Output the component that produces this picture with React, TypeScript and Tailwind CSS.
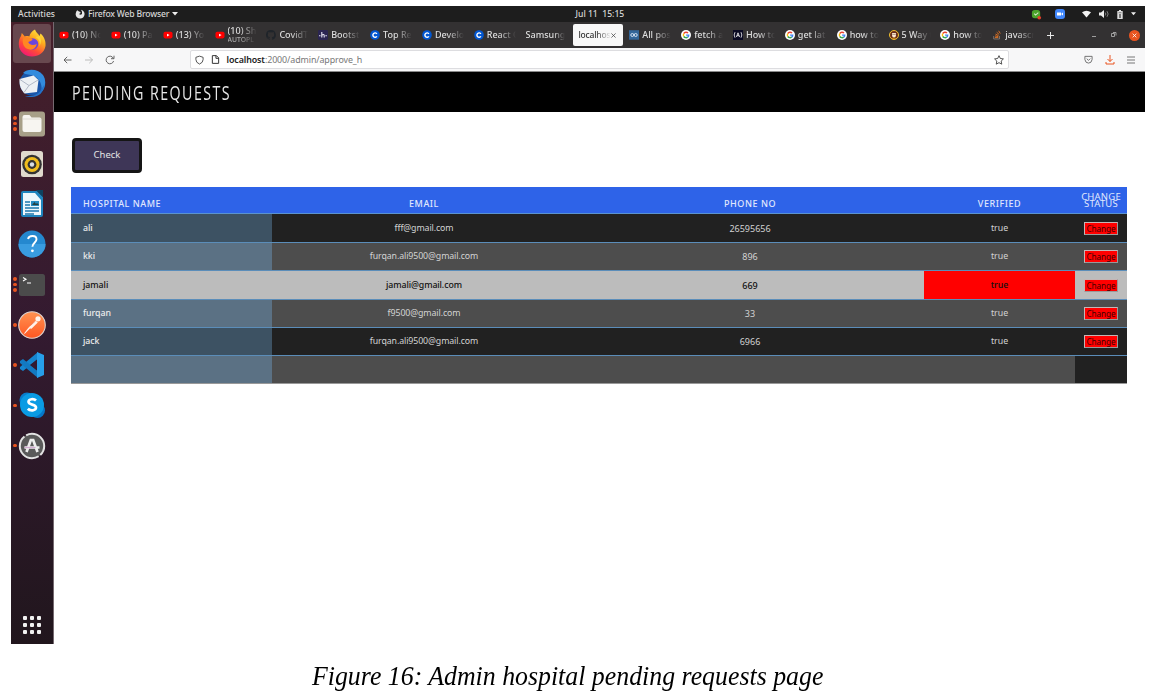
import React from "react";

type TabData = { icon?: string; text: string; sub?: string; active?: boolean };

const tabs: TabData[] = [
  { icon: "yt", text: "(10) No" },
  { icon: "yt", text: "(10) Pa" },
  { icon: "yt", text: "(13) Yo" },
  { icon: "yt", text: "(10) Sh", sub: "AUTOPL" },
  { icon: "gh", text: "CovidT" },
  { icon: "hn", text: "Bootst" },
  { icon: "c", text: "Top Re" },
  { icon: "c", text: "Develo" },
  { icon: "c", text: "React C" },
  { text: "Samsung E" },
  { text: "localhos", active: true },
  { icon: "oo", text: "All pos" },
  { icon: "g", text: "fetch a" },
  { icon: "a", text: "How to" },
  { icon: "g", text: "get lat" },
  { icon: "g", text: "how to" },
  { icon: "face", text: "5 Way t" },
  { icon: "g", text: "how to" },
  { icon: "so", text: "javascr" },
];

function Favicon({ kind }: { kind: string }) {
  const cls = "h-[10px] w-[10px] shrink-0";
  switch (kind) {
    case "yt":
      return (
        <svg viewBox="0 0 10 10" className={cls}>
          <rect x="0.5" y="1.8" width="9" height="6.600" rx="1.8" fill="#f00" />
          <path d="M4 3.7 6.6 5.1 4 6.5z" fill="#fff" />
        </svg>
      );
    case "gh":
      return (
        <svg viewBox="0 0 16 16" className={cls}>
          <path
            fill="#1f242a"
            d="M8 0a8 8 0 0 0-2.5 15.6c.4 0 .5-.2.5-.4v-1.5c-2.200.5-2.700-1-2.700-1-.4-.9-.9-1.200-.9-1.200-.7-.5.1-.5.1-.5.8.1 1.200.8 1.200.8.7 1.300 1.900.9 2.300.7.1-.5.300-.9.500-1.100-1.800-.2-3.600-.9-3.600-4 0-.9.300-1.600.8-2.100-.1-.2-.4-1 .1-2.100 0 0 .7-.2 2.200.8a7.500 7.500 0 0 1 4 0c1.500-1 2.200-.8 2.200-.8.5 1.100.2 1.900.1 2.100.5.5.8 1.200.8 2.100 0 3.100-1.900 3.800-3.700 4 .3.300.6.8.6 1.500v2.200c0 .2.1.5.5.4A8 8 0 0 0 8 0z"
          />
        </svg>
      );
    case "hn":
      return (
        <svg viewBox="0 0 10 10" className={cls}>
          <rect width="10" height="10" rx="1.4" fill="#2b2552" />
          <path d="M3.800 2v5.500M3.800 5.200q2.400-1.600 2.400.5v1.800M1 5.700h1.500M7.400 5.700h1.500" stroke="#e8e6f5" strokeWidth="1.100" fill="none" />
        </svg>
      );
    case "c":
      return (
        <svg viewBox="0 0 10 10" className={cls}>
          <circle cx="5" cy="5" r="4.800" fill="#0056d2" />
          <path d="M6.900 3.800a2.200 2.200 0 1 0 0 2.500" stroke="#fff" strokeWidth="1.400" fill="none" />
        </svg>
      );
    case "oo":
      return (
        <svg viewBox="0 0 10 10" className={cls}>
          <rect width="10" height="9.500" y=".2" fill="#336699" />
          <circle cx="3.300" cy="5" r="1.500" stroke="#e4eefa" strokeWidth=".9" fill="none" />
          <circle cx="6.700" cy="5" r="1.500" stroke="#e4eefa" strokeWidth=".9" fill="none" />
        </svg>
      );
    case "g":
      return (
        <svg viewBox="0 0 10 10" className={cls}>
          <circle cx="5" cy="5" r="5" fill="#fff" />
          <path d="M2.800 3.500A2.700 2.700 0 0 1 7 3.100" stroke="#ea4335" strokeWidth="1.400" fill="none" />
          <path d="M2.800 3.500a2.900 2.900 0 0 0 0 3" stroke="#fbbc05" strokeWidth="1.400" fill="none" />
          <path d="M2.800 6.500A2.700 2.700 0 0 0 6.700 7.100" stroke="#34a853" strokeWidth="1.400" fill="none" />
          <path d="M5.100 5.100h2.600A2.700 2.700 0 0 1 6.700 7.100" stroke="#4285f4" strokeWidth="1.400" fill="none" />
        </svg>
      );
    case "a":
      return (
        <svg viewBox="0 0 10 10" className={cls}>
          <rect width="10" height="10" fill="#0a0a23" />
          <path d="M2 2.200Q.3 5 2 7.700M8 2.200Q9.700 5 8 7.700M3.400 7 5 2.800 6.600 7M4 5.700h2" stroke="#fff" strokeWidth=".8" fill="none" />
        </svg>
      );
    case "face":
      return (
        <svg viewBox="0 0 10 10" className={cls}>
          <circle cx="5" cy="5" r="4.500" fill="#6b2f1c" stroke="#f2c230" strokeWidth="1" />
          <path d="M3.100 3h3.800v2.500a1.900 1.900 0 0 1-3.800 0z" fill="#ffe9d4" />
          <path d="M2.500 8.500Q5 6.500 7.500 8.500z" fill="#e7a424" />
          <path d="M3.400 4.400h3.200" stroke="#542" strokeWidth=".5" />
        </svg>
      );
    default:
      return (
        <svg viewBox="0 0 10 10" className={cls}>
          <path d="M1.700 6v3h5.800V6" stroke="#8b8078" strokeWidth=".8" fill="none" />
          <path d="M2.900 7.600h3.400M3 5.900l3.300.7M3.500 4.100l3 1.500M4.700 2.300l2.500 2.200M6.600.8l1.700 2.700" stroke="#ee7620" strokeWidth=".9" />
        </svg>
      );
  }
}

function Tab({ tab }: { tab: TabData }) {
  if (tab.active) {
    return (
      <div className="flex w-[51.85px] shrink-0 pl-px">
        <div className="-ml-[2px] flex h-[22px] w-[50px] items-center rounded-[2px] bg-[#f8f8f8] pl-[5px] text-[8.500px] tracking-[-0.2px] text-[#333]">
          <span className="w-[33px] whitespace-nowrap mask-r-from-55%">{tab.text}</span>
          <svg viewBox="0 0 6 6" className="h-[5px] w-[5px]">
            <path d="M.5.5l5 5M5.500.5l-5 5" stroke="#444" strokeWidth=".9" />
          </svg>
        </div>
      </div>
    );
  }
  return (
    <div className="flex w-[51.85px] shrink-0 items-center gap-[3px] pl-[3px] text-[#dedede]">
      {tab.icon && <Favicon kind={tab.icon} />}
      <div className={tab.icon ? "w-[29px] overflow-hidden whitespace-nowrap mask-r-from-40%" : "w-[39px] overflow-hidden whitespace-nowrap mask-r-from-70%"}>
        <div className={tab.sub ? "-mt-px leading-[10px]" : "leading-[14px]"}>{tab.text}</div>
        {tab.sub && <div className="text-[6.800px] leading-[8px] text-[#aaa]">{tab.sub}</div>}
      </div>
    </div>
  );
}

function DockItem({ dots = 0, active = false, children }: { dots?: number; active?: boolean; children: React.ReactNode }) {
  return (
    <div className="flex h-[40.25px] items-center">
      <div className="flex w-[6px] shrink-0 flex-col items-center gap-[2px] pl-[2px]">
        {Array.from({ length: dots }, (_, i) => (
          <span key={i} className="h-[3.500px] w-[3.500px] rounded-full bg-[#e95420]" />
        ))}
      </div>
      <div className={active ? "-ml-[4px] flex h-[39px] w-[38px] items-center justify-center rounded-[3px] bg-[#68484f]" : "-ml-[4px] flex h-[38px] w-[38px] items-center justify-center"}>
        <svg viewBox="0 0 28 28" className="h-[28px] w-[28px]">
          {children}
        </svg>
      </div>
    </div>
  );
}

function Dock() {
  return (
    <aside className="flex w-[43px] shrink-0 flex-col justify-between border-r border-[#756a70] bg-linear-to-b from-[#461f2a] via-[#331a30] to-[#21161d] pt-[1px]">
      <div>
        <DockItem dots={1} active>
          <defs>
            <linearGradient id="fox" x1=".85" y1="0" x2=".25" y2="1">
              <stop offset="0" stopColor="#fff04a" />
              <stop offset=".35" stopColor="#ffae1e" />
              <stop offset=".68" stopColor="#ff4c36" />
              <stop offset="1" stopColor="#f0147a" />
            </linearGradient>
          </defs>
          <path d="M17 .5c1 3 3 4 4.500 6.500l1-2.500c4 3.500 5.500 8 5 12.500C26.500 23.500 20.500 27.500 14 27.500S1 23 .8 15.500C.7 12 1.500 9 3 7l.8-3 3 3.500c1.500-.6 3-.5 4.500 0C12 4.500 14 2 17 .5z" fill="url(#fox)" />
          <circle cx="14.500" cy="15" r="5.800" fill="#6b45dc" />
          <path d="M5 9.500c3-1.500 6.500-1.500 9.500.5 0 2-3 2-4.200 3.300 1.500 2.800 4.700 3.500 8.500 1.700-1 4.500-4.500 6.500-8 5.300C6 19.500 4 14.500 5 9.500z" fill="#ff8722" />
          <path d="M17.500 8c3 1.500 5 5 4 9 2-3 2-7 0-10z" fill="#ffd53a" />
        </DockItem>
        <DockItem>
          <circle cx="14.500" cy="14" r="12.800" fill="#1a55a8" />
          <path d="M5 4C10-1 20 0 25 6c3.500 5 2.500 13-1.500 17 1-7-1.500-13-7.500-16C12 5 8 6 5 4z" fill="#338bdd" />
          <path d="M1.500 10l14-3.500 5 4.500-1.500 12-12.500 1.500C3 21 1 16 1.500 10z" fill="#edf0f4" />
          <path d="M2 10.500l9 6 9-5.500M11 16.500l-5 7" stroke="#aab2c2" strokeWidth=".9" fill="none" />
          <path d="M7 27c8 1 15-2 17-8l2-3c0 7-5 12-12 12q-4 .5-7-1z" fill="#2472c8" />
        </DockItem>
        <DockItem dots={3}>
          <rect x="1" y="1.500" width="26" height="25" rx="3" fill="#a79f88" />
          <path d="M4.500 7q0-2 2-2h5l2 2.500h8q2 0 2 2V20q0 2-2 2h-15q-2 0-2-2z" fill="#f7f5f1" />
          <path d="M5 9h18" stroke="#d9d6ce" strokeWidth=".8" />
        </DockItem>
        <DockItem>
          <rect x="3" y="1" width="22" height="26" rx="2.500" fill="#e0dacd" />
          <circle cx="14" cy="14.500" r="9.800" fill="#333" />
          <circle cx="14" cy="14.500" r="7.500" fill="#f0bd1e" />
          <circle cx="14" cy="14.500" r="4.400" fill="#333" />
          <circle cx="14" cy="14.500" r="2.200" fill="#d8dee5" />
        </DockItem>
        <DockItem>
          <path d="M5 1h14l6 6v18q0 2-2 2H5q-2 0-2-2V3q0-2 2-2z" fill="#1e84bd" />
          <path d="M5 3h12l6 7v15H5z" fill="#edf7fc" />
          <path d="M18 0h7v7z" fill="#0d4260" />
          <path d="M7 12h5M7 15h5M7 18h14M7 21h14M7 24h9" stroke="#1d78ac" strokeWidth="1.300" />
          <rect x="13" y="11" width="8" height="5" fill="#268bc1" />
          <path d="M14 15l2.500-3 1.500 2 1-1 2 2z" fill="#263f3d" />
        </DockItem>
        <DockItem>
          <circle cx="14" cy="14" r="13.500" fill="#2488cf" />
          <path d="M.5 14a13.500 13.500 0 0 0 27 0z" fill="#399ce0" />
          <path d="M10 9c1-4 8.500-4 8.500.3 0 3.400-4.100 3.600-4.100 7.500" stroke="#fff" strokeWidth="1.900" fill="none" />
          <circle cx="14.400" cy="20.800" r="1.400" fill="#fff" />
        </DockItem>
        <DockItem dots={3}>
          <rect x="1" y="3" width="26" height="22" rx="2.500" fill="#4b4b4b" />
          <path d="M5 6.500l3 1.700L5 10M9 12h4" stroke="#fff" strokeWidth="1.100" fill="none" />
        </DockItem>
        <DockItem dots={1}>
          <defs>
            <linearGradient id="orb" x1="0" y1="0" x2="0" y2="1">
              <stop offset="0" stopColor="#ff9352" />
              <stop offset="1" stopColor="#ff5722" />
            </linearGradient>
          </defs>
          <circle cx="14" cy="14" r="13.300" fill="url(#orb)" stroke="#ddd2cf" strokeWidth="1.100" />
          <circle cx="20" cy="7.800" r="2.600" fill="#fff4ed" />
          <path d="M17.500 9.500l2.300 2-6.300 6.300-1.500-.3L6.500 23l-.3-.7 4-5.300z" fill="#fff1e9" />
          <path d="M12.500 14.500l5-4.500" stroke="#e5643c" strokeWidth=".6" />
        </DockItem>
        <DockItem dots={1}>
          <path d="M20 1v7L5 20l-3-2v-2z" fill="#1686cf" />
          <path d="M20 27v-7L5 8l-3 2v2z" fill="#1379c1" />
          <path d="M19 1l7 3v20l-7 3z" fill="#279fea" />
          <path d="M19 8.500v11L12 14z" fill="#331a30" />
        </DockItem>
        <DockItem dots={1}>
          <circle cx="9" cy="9" r="7.500" fill="#087dcc" />
          <circle cx="19.500" cy="19.500" r="7.500" fill="#0577c9" />
          <circle cx="14" cy="14" r="12" fill="#0a9be4" />
          <path d="M18 9.500c-2-2-7.500-1.800-7.500 1.300 0 3.600 7.500 2 7.500 5.800 0 3.300-6 3.500-8.200 1.200" stroke="#fff" strokeWidth="2.700" fill="none" />
        </DockItem>
        <DockItem dots={1}>
          <circle cx="14" cy="14" r="12.200" fill="#5a5a5a" stroke="#e3e3e3" strokeWidth="2" strokeDasharray="10 2 37 2 25.600 0" />
          <path d="M8.500 20l4.300-12h2.400l4.300 12M6.500 15.500h15" stroke="#eee" strokeWidth="2.700" fill="none" />
          <path d="M6.500 15.500h11" stroke="#d3abd2" strokeWidth="1.300" />
        </DockItem>
      </div>
      <div className="mb-[10px] ml-[12px] grid w-[18px] grid-cols-3 gap-[3px]">
        {Array.from({ length: 9 }, (_, i) => (
          <span key={i} className="h-[4px] w-[4px] rounded-[1px] bg-[#f1f1f1]" />
        ))}
      </div>
    </aside>
  );
}

function SystemBar() {
  return (
    <header className="flex h-[16px] items-center bg-[#1d1d1d] text-[8.600px] leading-[16px] font-medium whitespace-nowrap text-[#d6d6d6]">
      <span className="w-[64px] pl-[7px]">Activities</span>
      <svg viewBox="0 0 10 10" className="h-[10px] w-[10px]">
        <path d="M1 3.500q.2-1.500 1.300-2.200L4 2.500q2 0 1.500 1.500L4 5q1.500 1.500 3 0Q7.500 2.500 6 .7q4 1.300 3.500 5A4.500 4.500 0 0 1 .7 6q-.2-1.500.3-2.500z" fill="#e6e6e6" />
      </svg>
      <span className="ml-[3px] w-[84px] tracking-[-0.18px]">Firefox Web Browser</span>
      <svg viewBox="0 0 6 4" className="h-[4px] w-[6px]"><path d="M0 0h6L3 3.500z" fill="#eee" /></svg>
      <span className="ml-[397.500px] w-[50px] whitespace-pre">Jul 11  15:15</span>
      <div className="ml-auto flex items-center pr-[9.500px]">
        <svg viewBox="0 0 12 12" className="mr-[13px] h-[11px] w-[11px]">
          <rect x="1" y="1" width="9" height="9" rx="3" fill="#4ca22b" />
          <path d="M3.500 5l1.500 1.700L8 4" stroke="#d7ebca" strokeWidth="1.100" fill="none" />
          <circle cx="9" cy="9.500" r="2" fill="#e7402c" />
        </svg>
        <svg viewBox="0 0 10 10" className="mr-[17px] h-[10px] w-[10px]">
          <rect width="10" height="10" rx="3" fill="#4087fc" />
          <path d="M2 3.500h4v3H2zM6.500 4.500L8 3.500v3L6.500 5.500z" fill="#fff" />
        </svg>
        <svg viewBox="0 0 10 8" className="mr-[8px] h-[8px] w-[9px]"><path d="M0 2Q5-1.500 10 2L5 8z" fill="#f4f4f4" /></svg>
        <svg viewBox="0 0 10 8" className="mr-[8px] h-[8px] w-[10px]">
          <path d="M0 2.500h2L5 0v8L2 5.500H0z" fill="#eee" />
          <path d="M6.200 2.500q1.300 1.500 0 3M8 1.200q2.300 2.800 0 5.600" stroke="#999" strokeWidth=".8" fill="none" />
        </svg>
        <svg viewBox="0 0 6 9" className="mr-[8px] h-[9px] w-[6px]">
          <path d="M2 0h2v1h1.700v8H.3V1H2z" fill="#ddd" />
          <path d="M1.500 2.200h3v1h-3zM2 4h2v4H2z" fill="#777" />
        </svg>
        <svg viewBox="0 0 6 4" className="h-[4px] w-[5px]"><path d="M0 0h6L3 3.500z" fill="#eee" /></svg>
      </div>
    </header>
  );
}

function Toolbar() {
  return (
    <nav className="flex h-[24px] items-center border-b border-[#8a8a8a] bg-[#f7f7f8] text-[#444]">
      <svg viewBox="0 0 54 10" className="ml-[9px] h-[10px] w-[54px]" fill="none">
        <path d="M8.500 5H1M4.200 1.800L1 5l3.200 3.200" stroke="#555" strokeWidth=".9" />
        <path d="M22 5h7.500M26.300 1.800L29.500 5l-3.200 3.200" stroke="#b4b4b4" strokeWidth=".9" />
        <path d="M50.300 3.200a3.800 3.800 0 1 0 .3 2.800M51 .7v3h-3" stroke="#555" strokeWidth=".9" />
      </svg>
      <div className="ml-[73px] flex h-[19px] w-[819px] items-center rounded-[2px] border border-[#dddde0] bg-white pl-[4px]">
        <svg viewBox="0 0 10 10" className="h-[10px] w-[9px]" fill="none"><path d="M5 .7L9 2v2.500Q9 8 5 9.500 1 8 1 4.500V2z" stroke="#444" /></svg>
        <svg viewBox="0 0 10 10" className="ml-[7px] h-[9px] w-[9px]" fill="none"><path d="M1.500.7H6L8.500 3.200V9.300h-7zM5.500.7v3h3" stroke="#333" strokeWidth="1.100" /></svg>
        <span className="ml-[6.500px] text-[8.900px] tracking-[-0.1px] whitespace-nowrap text-[#777]"><b className="font-semibold text-[#222]">localhost</b>:2000/admin/approve_h</span>
        <svg viewBox="0 0 12 12" className="mr-[4px] ml-auto h-[10px] w-[10px]" fill="none"><path d="M6 .8l1.600 3.400 3.700.5-2.700 2.600.7 3.700L6 9.200 2.700 11l.7-3.700L.7 4.700l3.700-.5z" stroke="#444" strokeWidth="1.100" strokeLinejoin="round" /></svg>
      </div>
      <svg viewBox="0 0 10 10" className="ml-[75px] h-[9px] w-[9px]" fill="none"><path d="M1 1.500h8V5Q8.500 9 5 9 1.500 9 1 5zM3 4l2 2 2-2" stroke="#666" /></svg>
      <svg viewBox="0 0 10 10" className="ml-[11.500px] h-[10px] w-[10px]" fill="none"><path d="M5 0v6.500M2.500 4L5 6.500 7.500 4M1 7v2h8V7" stroke="#e95420" /></svg>
      <svg viewBox="0 0 8 8" className="ml-[12.500px] h-[8px] w-[8px]"><path d="M0 1h8M0 4h8M0 7h8" stroke="#777" /></svg>
    </nav>
  );
}

type Row = { h: string; name: string; email: string; phone: string; tone: "dark" | "mid" | "hover"; last?: boolean };
const rows: Row[] = [
  { h: "h-[29px]", name: "ali", email: "fff@gmail.com", phone: "26595656", tone: "dark" },
  { h: "h-[28px]", name: "kki", email: "furqan.ali9500@gmail.com", phone: "896", tone: "mid" },
  { h: "h-[29px]", name: "jamali", email: "jamali@gmail.com", phone: "669", tone: "hover" },
  { h: "h-[28px]", name: "furqan", email: "f9500@gmail.com", phone: "33", tone: "mid" },
  { h: "h-[28px]", name: "jack", email: "furqan.ali9500@gmail.com", phone: "6966", tone: "dark" },
  { h: "h-[28px]", name: "", email: "", phone: "", tone: "mid", last: true },
];
const toneRow = { dark: "bg-[#212121] text-[#d3d3d3]", mid: "bg-[#4d4d4d] text-[#d3d3d3]", hover: "bg-[#bcbcbc] text-[#111] font-medium" };
const toneName = { dark: "bg-[#3d5263] text-[#ececec]", mid: "bg-[#5b7184] text-[#ececec]", hover: "text-[#111]" };
const cell = "flex items-center justify-center";
const cols = "grid grid-cols-[201px_304px_348px_151px_52px]";

function RequestTable() {
  return (
    <div className="ml-[17px] w-[1056px] text-[9px]">
      <div className={cols + " h-[27px] border-b border-[#5b93cf] bg-[#2e63e8] text-[9px] font-medium tracking-[0.55px] text-[#e0e8fd]"}>
        <div className="flex items-center pt-[8px] pl-[12px]">HOSPITAL NAME</div>
        <div className={cell + " pt-[8px]"}>EMAIL</div>
        <div className={cell + " pt-[8px]"}>PHONE NO</div>
        <div className={cell + " pt-[8px]"}>VERIFIED</div>
        <div className="flex flex-col items-center pt-[6px] text-[9.500px] leading-[7px] font-normal tracking-[0.2px]">
          <span>CHANGE</span>
          <span>STATUS</span>
        </div>
      </div>
      {rows.map((r, i) => (
        <div key={i} className={cols + " " + r.h + " " + toneRow[r.tone] + (r.last ? " border-b border-[#999]" : " border-b border-[#5b8db9]")}>
          <div className={"flex items-center pt-px pl-[12px] text-[8.800px] font-medium tracking-[-0.05px] " + toneName[r.tone]}>{r.name}</div>
          <div className={cell + " pt-px text-[8.800px] tracking-[-0.1px]"}>{r.email}</div>
          <div className={cell + " pt-px"}>{r.phone}</div>
          <div className={cell + " pt-px text-[8.800px]" + (r.tone === "hover" ? " bg-[#f00]" : "")}>{r.last ? "" : "true"}</div>
          <div className={cell + (r.last ? " bg-[#212121]" : "")}>
            {!r.last && (
              <button className="h-[13px] w-[34px] border border-t-[#c5b5b5] border-r-[#999] border-b-[#999] border-l-[#c5b5b5] bg-[#f00] text-[8.200px] leading-[11px] font-normal tracking-[-0.1px] text-[#400]">Change</button>
            )}
          </div>
        </div>
      ))}
    </div>
  );
}

export default function App() {
  return (
    <div className="h-[697px] w-[1153px] overflow-hidden bg-white pt-[6px] pl-[11px] font-['Noto_Sans',sans-serif]">
      <div className="h-[638px] w-[1134px]">
        <SystemBar />
        <div className="flex h-[622px]">
          <Dock />
          <div className="min-w-0 flex-1">
            <div className="flex h-[26px] items-center bg-[#333132] pl-[2px] text-[9px] font-medium">
              {tabs.map((t, i) => <Tab key={i} tab={t} />)}
              <svg viewBox="0 0 8 8" className="ml-[6px] h-[7px] w-[7px]"><path d="M4 0v8M0 4h8" stroke="#eee" strokeWidth="1.100" /></svg>
              <svg viewBox="0 0 26 8" className="ml-[38px] h-[8px] w-[26px]" fill="none">
                <path d="M0 5.500h4M19.500 2.500h3v3h-3zM21 1.500h3v3" stroke="#aaa" strokeWidth=".9" />
              </svg>
              <svg viewBox="0 0 12 12" className="ml-[11px] h-[11px] w-[11px] shrink-0"><circle cx="6" cy="6" r="6" fill="#e95420" /><path d="M4 4l4 4M8 4L4 8" stroke="#fff" strokeWidth=".9" /></svg>
            </div>
            <Toolbar />
            <div className="h-[40px] bg-black pl-[18px]">
              <h1 className="w-[230px] origin-left scale-x-[0.73] pt-px text-[19.500px] leading-[39px] font-normal tracking-[2px] whitespace-nowrap text-[#e6e6e6] font-['Open_Sans',sans-serif]">PENDING REQUESTS</h1>
            </div>
            <button className="mt-[26px] ml-[18px] block h-[35px] w-[70px] rounded-[4px] border-[3px] border-[#151515] bg-[#3e3657] text-[9.500px] text-[#e4e4e4]">Check</button>
            <div className="mt-[14px]"><RequestTable /></div>
          </div>
        </div>
      </div>
      <p className="mt-[16px] ml-[301px] w-[529px] origin-left scale-x-[0.968] text-[26.700px] leading-[32px] whitespace-nowrap text-black italic font-['Liberation_Serif',serif]">Figure 16: Admin hospital pending requests page</p>
    </div>
  );
}
